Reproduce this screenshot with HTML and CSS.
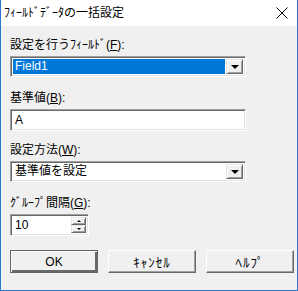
FILE: index.html
```html
<!DOCTYPE html>
<html lang="ja">
<head>
<meta charset="UTF-8" />
<title>ﾌｨｰﾙﾄﾞﾃﾞｰﾀの一括設定</title>
<link rel="stylesheet" href="styles.css">
</head>
<body>

<div class="window">
  <!-- title bar -->
  <div class="titlebar">
    <span class="title">ﾌｨｰﾙﾄﾞﾃﾞｰﾀの一括設定</span>
    <svg class="close" width="12" height="12" viewBox="0 0 12 12">
      <path d="M0.5 0.5 L11.5 11.5 M11.5 0.5 L0.5 11.5" stroke="#000" stroke-width="1" fill="none"/>
    </svg>
  </div>

  <div class="content">
    <div class="field">
      <div class="label">設定を行うﾌｨｰﾙﾄﾞ(<u>F</u>):</div>
      <div class="sunken combo">
        <div class="combo-value selected">Field1</div>
        <div class="raised drop-btn"><span class="arrow"></span></div>
      </div>
    </div>

    <div class="field short">
      <div class="label">基準値(<u>B</u>):</div>
      <div class="sunken edit">A</div>
    </div>

    <div class="field">
      <div class="label">設定方法(<u>W</u>):</div>
      <div class="sunken combo">
        <div class="combo-value">基準値を設定</div>
        <div class="raised drop-btn"><span class="arrow"></span></div>
      </div>
    </div>

    <div class="field">
      <div class="label">ｸﾞﾙｰﾌﾟ間隔(<u>G</u>):</div>
      <div class="sunken spin">
        <div class="spin-value">10</div>
        <div class="spin-btns">
          <div class="raised spin-btn"><span class="tri up"></span></div>
          <div class="raised spin-btn"><span class="tri down"></span></div>
        </div>
      </div>
    </div>

    <div class="buttons">
      <div class="btn default">OK</div>
      <div class="btn kana">ｷｬﾝｾﾙ</div>
      <div class="btn kana">ﾍﾙﾌﾟ</div>
    </div>
  </div>
</div>

</body>
</html>
```

FILE: styles.css
```css
:root {
  --face: #f0f0f0;
  --accent: #2b79d0;
  --select: #0078d7;
}
body {
  margin: 0;
  font-family: "Liberation Sans", "Noto Sans CJK JP", sans-serif;
  font-size: 12px;
  color: #000;
}
.window {
  width: 298px;
  height: 291px;
  box-sizing: border-box;
  background: var(--face);
  border: 1px solid var(--accent);
  border-top: none;
  display: flex;
  flex-direction: column;
}
.titlebar {
  height: 26px;
  background: #fff;
  display: flex;
  align-items: center;
  justify-content: space-between;
  padding: 0 9px 0 3px;
  flex-shrink: 0;
}
.title {
  font-size: 12px;
  line-height: 14px;
}
.content {
  padding: 12px 0 0 9px;
}
.field {
  margin-bottom: 14px;
}
.field.short {
  margin-bottom: 12px;
}
.label {
  line-height: 14px;
  height: 14px;
  margin-bottom: 4px;
}
.label u {
  text-underline-offset: 1px;
}

/* 3D borders */
.sunken {
  box-sizing: border-box;
  border-top: 1px solid #a0a0a0;
  border-left: 1px solid #a0a0a0;
  border-bottom: 1px solid #fff;
  border-right: 1px solid #fff;
  box-shadow: inset 1px 1px #696969, inset -1px -1px #e3e3e3;
  background: #fff;
  padding: 2px;
}
.raised {
  box-sizing: border-box;
  background: var(--face);
  border-top: 1px solid #e3e3e3;
  border-left: 1px solid #e3e3e3;
  border-bottom: 1px solid #696969;
  border-right: 1px solid #696969;
  box-shadow: inset 1px 1px #fff, inset -1px -1px #a0a0a0;
}

.combo {
  width: 236px;
  height: 21px;
  display: flex;
  gap: 1px;
}
.combo-value {
  flex: 1;
  line-height: 15px;
  padding-left: 2px;
}
.combo-value.selected {
  background: var(--select);
  color: #fff;
}
.drop-btn {
  width: 17px;
  display: flex;
  align-items: center;
  justify-content: center;
}
.arrow {
  width: 0;
  height: 0;
  border-left: 4px solid transparent;
  border-right: 4px solid transparent;
  border-top: 4px solid #000;
}
.edit {
  width: 236px;
  height: 22px;
  line-height: 16px;
  padding-left: 4px;
}
.spin {
  width: 79px;
  height: 22px;
  display: flex;
  padding: 2px 2px 2px 4px;
}
.spin-value {
  flex: 1;
  line-height: 16px;
}
.spin-btns {
  display: flex;
  flex-direction: column;
  width: 15px;
}
.spin-btn {
  flex: 1;
  display: flex;
  align-items: center;
  justify-content: center;
}
.tri {
  width: 0;
  height: 0;
  border-left: 2px solid transparent;
  border-right: 2px solid transparent;
}
.tri.up { border-bottom: 2px solid #000; }
.tri.down { border-top: 2px solid #000; }

.buttons {
  display: flex;
  gap: 10px;
  margin-top: 9px;
}
.btn {
  width: 88px;
  height: 23px;
  box-sizing: border-box;
  display: flex;
  align-items: center;
  justify-content: center;
  background: var(--face);
  border-top: 1px solid #fff;
  border-left: 1px solid #fff;
  border-bottom: 1px solid #696969;
  border-right: 1px solid #696969;
  box-shadow: inset -1px -1px #a0a0a0;
}
.btn.kana {
  font-size: 13px;
  letter-spacing: 1px;
}
.btn.default {
  border: 1px solid #646464;
  box-shadow: inset 1px 1px #fff, inset -2px -2px #696969;
}
```
